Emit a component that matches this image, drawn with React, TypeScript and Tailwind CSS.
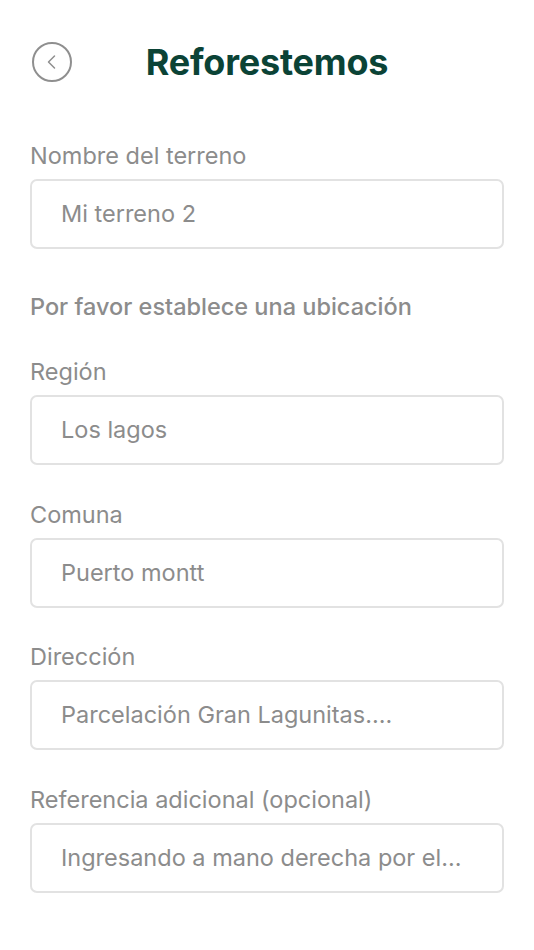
const FIELDS = [
  { label: 'Región', value: 'Los lagos' },
  { label: 'Comuna', value: 'Puerto montt' },
  { label: 'Dirección', value: 'Parcelación Gran Lagunitas....' },
  { label: 'Referencia adicional (opcional)', value: 'Ingresando a mano derecha por el...' },
]

function Field({ label, value, className = '' }: { label: string; value: string; className?: string }) {
  return (
    <div className={className}>
      <p className="text-[23.5px] leading-[30px] text-[#8c8c8c]">{label}</p>
      <div className="mt-[8px] flex h-[70px] items-center rounded-[7px] border-2 border-[#e2e2e2] pl-[29px] pr-[30px] text-[23.5px] text-[#8c8c8c]">
        {value}
      </div>
    </div>
  )
}

export default function App() {
  return (
    <div className="min-h-[950px] bg-white px-[30px] pt-[42px] font-['Inter',sans-serif]">
      {/* header */}
      <div className="relative flex h-[40px] items-center justify-center">
        <button className="absolute left-[2px] top-0 grid h-[40px] w-[40px] place-items-center rounded-full border-2 border-[#8f8f8f]">
          <svg width="16" height="16" viewBox="0 0 16 16" fill="none">
            <path d="M10.5 2 L4.5 8 L10.5 14" stroke="#8f8f8f" strokeWidth="1.5" strokeLinecap="round" strokeLinejoin="round" />
          </svg>
        </button>
        <h1 className="text-[36px] font-bold tracking-[-0.2px] text-[#0b4336]">Reforestemos</h1>
      </div>

      <Field label="Nombre del terreno" value="Mi terreno 2" className="mt-[59px]" />

      <p className="mt-[43px] text-[23.5px] font-medium leading-[30px] text-[#8c8c8c]">
        Por favor establece una ubicación
      </p>

      <Field label={FIELDS[0].label} value={FIELDS[0].value} className="mt-[35px]" />
      {FIELDS.slice(1).map((f) => (
        <Field key={f.label} label={f.label} value={f.value} className="mt-[34.5px]" />
      ))}
    </div>
  )
}
